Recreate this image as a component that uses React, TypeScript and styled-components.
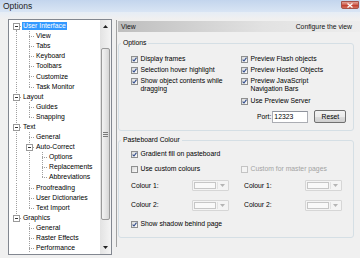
import React from "react";
import styled, { createGlobalStyle } from "styled-components";

const GlobalStyle = createGlobalStyle`
  html, body { margin: 0; padding: 0; }
  body {
    width: 360px;
    height: 258px;
    overflow: hidden;
    background: #f0f0f0;
    font-family: "Liberation Sans", Arial, sans-serif;
    font-size: 6.8px;
    color: #000;
  }
`;

const ROW_H = 10.1;

type Node = { label: string; level: number; expandable?: boolean; selected?: boolean; more?: boolean };

const nodes: Node[] = [
  { label: "User Interface", level: 0, expandable: true, selected: true },
  { label: "View", level: 1 },
  { label: "Tabs", level: 1 },
  { label: "Keyboard", level: 1 },
  { label: "Toolbars", level: 1 },
  { label: "Customize", level: 1 },
  { label: "Task Monitor", level: 1 },
  { label: "Layout", level: 0, expandable: true },
  { label: "Guides", level: 1 },
  { label: "Snapping", level: 1 },
  { label: "Text", level: 0, expandable: true },
  { label: "General", level: 1 },
  { label: "Auto-Correct", level: 1, expandable: true },
  { label: "Options", level: 2 },
  { label: "Replacements", level: 2 },
  { label: "Abbreviations", level: 2 },
  { label: "Proofreading", level: 1 },
  { label: "User Dictionaries", level: 1 },
  { label: "Text Import", level: 1 },
  { label: "Graphics", level: 0, expandable: true },
  { label: "General", level: 1 },
  { label: "Raster Effects", level: 1 },
  { label: "Performance", level: 1, more: true },
];

const hasNext = (i: number) => {
  const lv = nodes[i].level;
  for (let j = i + 1; j < nodes.length; j++) {
    if (nodes[j].level < lv) return false;
    if (nodes[j].level === lv) return true;
  }
  return !!nodes[i].more;
};

const continues = (level: number, i: number) => {
  for (let j = i - 1; j >= 0; j--) {
    if (nodes[j].level === level) return hasNext(j);
  }
  return false;
};

const Window = styled.div`
  width: 360px;
  height: 258px;
  display: flex;
  flex-direction: column;
`;

const TitleBar = styled.div`
  flex: none;
  height: 12px;
  display: flex;
  align-items: flex-start;
  justify-content: space-between;
  padding: 0 1px 0 3px;
  background: linear-gradient(#c3d5ed, #d9e5f4);
`;

const Title = styled.span`
  font-size: 8.5px;
  line-height: 12px;
  color: #1e1e1e;
`;

const CloseButton = styled.span`
  width: 18px;
  height: 8px;
  margin-top: 1px;
  box-sizing: border-box;
  border: 1px solid #a5524a;
  border-radius: 0 0 2px 2px;
  background: linear-gradient(#e2a196, #cf5b4b 50%, #c0392b 51%, #d4725f);
  display: flex;
  align-items: center;
  justify-content: center;
`;

const Client = styled.div`
  flex: 1;
  display: flex;
  align-items: flex-start;
  padding: 7px 0 0 8px;
  background: linear-gradient(#e6edf6, #f0f0f0 7px);
`;

const TreeBox = styled.div`
  width: 104px;
  height: 236px;
  box-sizing: border-box;
  border: 1px solid #828790;
  background: #fff;
  display: flex;
`;

const TreeList = styled.div`
  flex: 1;
  padding-top: 1px;
  overflow: hidden;
`;

const TreeRow = styled.div`
  height: ${ROW_H}px;
  display: flex;
  align-items: center;
  white-space: nowrap;
`;

const TreeLabel = styled.span<{ $selected?: boolean }>`
  padding: 0 1px;
  line-height: 8px;
  background: ${(p) => (p.$selected ? "#3399ff" : "transparent")};
  color: ${(p) => (p.$selected ? "#fff" : "#000")};
`;

const ScrollBar = styled.div`
  width: 11px;
  display: flex;
  flex-direction: column;
  background: linear-gradient(to right, #e3e3e3, #f4f4f4);
`;

const ScrollButton = styled.div<{ $h: number }>`
  height: ${(p) => p.$h}px;
  display: flex;
  align-items: center;
  justify-content: center;
`;

const ScrollTrack = styled.div`
  flex: 1;
  padding-top: 16px;
`;

const Thumb = styled.div`
  height: 172px;
  margin: 0 1px;
  box-sizing: border-box;
  border: 1px solid #9a9a9a;
  border-radius: 2px;
  background: linear-gradient(to right, #f3f3f3, #e6e6e6 50%, #d6d6d6);
  display: flex;
  align-items: center;
  justify-content: center;
`;

const Panel = styled.div`
  flex: 1;
  margin: 1px 0 0 4px;
  height: 226px;
  border-left: 1px solid #a0a0a0;
  padding: 1px 0 0 1px;
  display: flex;
  flex-direction: column;
`;

const Header = styled.div`
  height: 11px;
  display: flex;
  align-items: center;
  justify-content: space-between;
  padding: 0 8px 0 3px;
  background: linear-gradient(to right, #bebebe, #e2e2e2 60%, #ededed);
  color: #111;
`;

const Group = styled.fieldset<{ $top: number; $pad: string }>`
  margin: ${(p) => p.$top}px 6px 0 0;
  padding: ${(p) => p.$pad};
  border: 1px solid #d5dfe5;
  border-radius: 3px;
  min-width: 0;
`;

const Caption = styled.legend`
  padding: 0 2px;
  margin-left: -10px;
  line-height: 8.5px;
`;

const Columns = styled.div`
  display: grid;
  grid-template-columns: 110px 1fr;
  align-items: start;
`;

const Stack = styled.div`
  display: flex;
  flex-direction: column;
  gap: 2.5px;
`;

const CheckItem = styled.div<{ $disabled?: boolean; $mt?: number }>`
  display: flex;
  align-items: flex-start;
  gap: 2.5px;
  line-height: 8.5px;
  white-space: nowrap;
  margin-top: ${(p) => p.$mt ?? 0}px;
  color: ${(p) => (p.$disabled ? "#a3a3a3" : "#000")};
`;

const Box = styled.span<{ $disabled?: boolean }>`
  flex: none;
  width: 7px;
  height: 7px;
  margin-top: 0.75px;
  box-sizing: border-box;
  border: 1px solid ${(p) => (p.$disabled ? "#c4c4c4" : "#8e8f8f")};
  background: ${(p) => (p.$disabled ? "#f4f4f4" : "linear-gradient(135deg, #d9d9d9, #fbfbfb)")};
  display: flex;
  align-items: center;
  justify-content: center;
`;

const PortRow = styled.div`
  display: flex;
  align-items: center;
  height: 13px;
  margin-top: 1.8px;
  padding-left: 16px;
  white-space: nowrap;
`;

const PortLabel = styled.span`
  flex: none;
  margin-right: 1px;
`;

const PortField = styled.span`
  flex: none;
  width: 36px;
  height: 12px;
  box-sizing: border-box;
  border: 1px solid #abadb3;
  border-top-color: #8f939c;
  background: #fff;
  padding: 0 1px;
  line-height: 10px;
`;

const ResetButton = styled.span`
  flex: none;
  margin-left: 6px;
  width: 32px;
  height: 13px;
  box-sizing: border-box;
  border: 1px solid #707070;
  border-radius: 2px;
  background: linear-gradient(#f2f2f2, #ebebeb 50%, #dddddd 51%, #cfcfcf);
  display: flex;
  align-items: center;
  justify-content: center;
  line-height: 8px;
`;

const ColourRow = styled.div<{ $mt: number }>`
  display: grid;
  grid-template-columns: 110px 1fr;
  margin-top: ${(p) => p.$mt}px;
`;

const ColourCell = styled.div<{ $indent?: number }>`
  display: flex;
  align-items: center;
  padding-left: ${(p) => p.$indent ?? 0}px;
`;

const ColourLabel = styled.span`
  width: 61px;
  line-height: 8.5px;
`;

const Picker = styled.span`
  width: 37px;
  height: 11px;
  box-sizing: border-box;
  border: 1px solid #d6d6d6;
  border-radius: 1px;
  background: #f4f4f4;
  padding: 1px;
  display: flex;
`;

const Swatch = styled.span`
  flex: 1;
  border: 1px solid #c6c6c6;
  background: #f9f9f9;
`;

const PickerArrow = styled.span`
  width: 9px;
  display: flex;
  align-items: center;
  justify-content: center;
  border-left: 1px solid #e2e2e2;
  margin-left: 1px;
`;

const Tick = () => (
  <svg width="5" height="5" viewBox="0 0 5 5">
    <path d="M0.6 2.6 L2 4 L4.5 0.6" fill="none" stroke="#2f4a8a" strokeWidth="1.1" />
  </svg>
);

const Checkbox = ({
  label,
  checked,
  disabled,
  mt,
}: {
  label: React.ReactNode;
  checked?: boolean;
  disabled?: boolean;
  mt?: number;
}) => (
  <CheckItem $disabled={disabled} $mt={mt}>
    <Box $disabled={disabled}>{checked && <Tick />}</Box>
    <span>{label}</span>
  </CheckItem>
);

const Gutter = ({ node, index }: { node: Node; index: number }) => {
  const w = 13 * (node.level + 1);
  const mid = 5.5;
  const c = 7 + 13 * node.level + 0.5;
  const stroke = { stroke: "#a0a0a0", strokeWidth: 1, strokeDasharray: "1 1" };
  const guides = [];
  for (let k = 0; k < node.level; k++) {
    if (continues(k, index)) {
      const x = 7 + 13 * k + 0.5;
      guides.push(<line key={k} x1={x} y1={0} x2={x} y2={ROW_H} {...stroke} />);
    }
  }
  return (
    <svg width={w} height={ROW_H} viewBox={`0 0 ${w} ${ROW_H}`} style={{ flex: "none" }} shapeRendering="crispEdges">
      {guides}
      <line x1={c} y1={index === 0 ? mid : 0} x2={c} y2={hasNext(index) ? ROW_H : mid} {...stroke} />
      <line x1={c} y1={mid} x2={w} y2={mid} {...stroke} />
      {node.expandable && (
        <g>
          <rect x={c - 3} y={mid - 3} width={6} height={6} fill="#fff" stroke="#9a9a9a" />
          <line x1={c - 1.5} y1={mid} x2={c + 1.5} y2={mid} stroke="#333" />
        </g>
      )}
    </svg>
  );
};

const Arrow = ({ up, color = "#222" }: { up?: boolean; color?: string }) => (
  <svg width="5" height="3" viewBox="0 0 5 3">
    <path d={up ? "M0 3 L2.5 0 L5 3 Z" : "M0 0 L5 0 L2.5 3 Z"} fill={color} />
  </svg>
);

const ColourPicker = () => (
  <Picker>
    <Swatch />
    <PickerArrow>
      <Arrow color="#b5b5b5" />
    </PickerArrow>
  </Picker>
);

export default function App() {
  return (
    <Window>
      <GlobalStyle />
      <TitleBar>
        <Title>Options</Title>
        <CloseButton>
          <svg width="6" height="5" viewBox="0 0 6 5">
            <path d="M0.5 0.5 L5.5 4.5 M5.5 0.5 L0.5 4.5" stroke="#fff" strokeWidth="1.3" />
          </svg>
        </CloseButton>
      </TitleBar>
      <Client>
        <TreeBox>
          <TreeList>
            {nodes.map((n, i) => (
              <TreeRow key={i}>
                <Gutter node={n} index={i} />
                <TreeLabel $selected={n.selected}>{n.label}</TreeLabel>
              </TreeRow>
            ))}
          </TreeList>
          <ScrollBar>
            <ScrollButton $h={12}>
              <Arrow up />
            </ScrollButton>
            <ScrollTrack>
              <Thumb>
                <svg width="5" height="5" viewBox="0 0 5 5">
                  <path d="M0 0.5 H5 M0 2.5 H5 M0 4.5 H5" stroke="#7a7a7a" strokeWidth="1" />
                </svg>
              </Thumb>
            </ScrollTrack>
            <ScrollButton $h={13}>
              <Arrow />
            </ScrollButton>
          </ScrollBar>
        </TreeBox>
        <Panel>
          <Header>
            <span>View</span>
            <span>Configure the view</span>
          </Header>
          <Group $top={6.75} $pad="7.5px 6px 6.3px 12px">
            <Caption>Options</Caption>
            <Columns>
              <Stack>
                <Checkbox checked label="Display frames" />
                <Checkbox checked label="Selection hover highlight" />
                <Checkbox
                  checked
                  label={
                    <>
                      Show object contents while
                      <br />
                      dragging
                    </>
                  }
                />
              </Stack>
              <Stack>
                <Checkbox checked label="Preview Flash objects" />
                <Checkbox checked label="Preview Hosted Objects" />
                <Checkbox
                  checked
                  label={
                    <>
                      Preview JavaScript
                      <br />
                      Navigation Bars
                    </>
                  }
                />
                <Checkbox checked label="Use Preview Server" mt={1.2} />
                <PortRow>
                  <PortLabel>Port:</PortLabel>
                  <PortField>12323</PortField>
                  <ResetButton>Reset</ResetButton>
                </PortRow>
              </Stack>
            </Columns>
          </Group>
          <Group $top={5.75} $pad="5.5px 6px 9px 12px">
            <Caption>Pasteboard Colour</Caption>
            <Checkbox checked label="Gradient fill on pasteboard" />
            <Columns style={{ marginTop: 6.2 }}>
              <Checkbox label="Use custom colours" />
              <Checkbox disabled label="Custom for master pages" />
            </Columns>
            <ColourRow $mt={7}>
              <ColourCell>
                <ColourLabel>Colour 1:</ColourLabel>
                <ColourPicker />
              </ColourCell>
              <ColourCell $indent={3}>
                <ColourLabel>Colour 1:</ColourLabel>
                <ColourPicker />
              </ColourCell>
            </ColourRow>
            <ColourRow $mt={8.5}>
              <ColourCell>
                <ColourLabel>Colour 2:</ColourLabel>
                <ColourPicker />
              </ColourCell>
              <ColourCell $indent={3}>
                <ColourLabel>Colour 2:</ColourLabel>
                <ColourPicker />
              </ColourCell>
            </ColourRow>
            <Checkbox checked label="Show shadow behind page" mt={9} />
          </Group>
        </Panel>
      </Client>
    </Window>
  );
}
